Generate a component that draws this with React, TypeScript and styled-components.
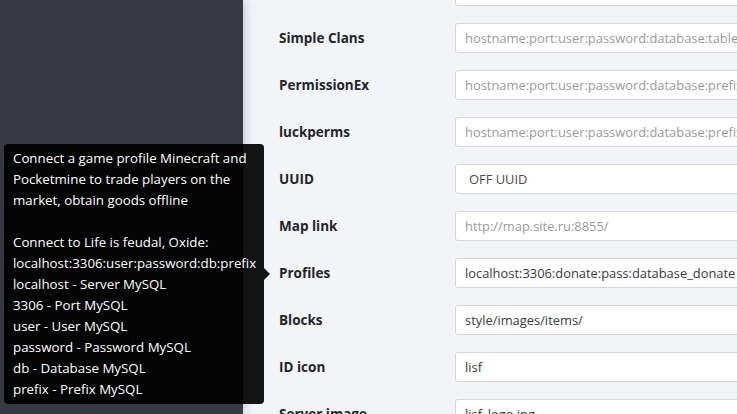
import React from "react";
import styled, { createGlobalStyle } from "styled-components";

const Global = createGlobalStyle`
  html, body { margin: 0; padding: 0; }
  body { font-family: "Open Sans", "Noto Sans", "Liberation Sans", sans-serif; }
  * { box-sizing: border-box; }
`;

const Page = styled.div`
  position: relative;
  display: grid;
  grid-template-columns: 243px 1fr;
  width: 737px;
  height: 414px;
  overflow: hidden;
  background: #f3f4f8;
`;

const Sidebar = styled.aside`
  background: #373a42;
  box-shadow: 2px 0 10px rgba(0, 0, 0, 0.18);
  z-index: 1;
`;

const Main = styled.main`
  padding-left: 36px;
  overflow: hidden;
`;

const Form = styled.div`
  display: flex;
  flex-direction: column;
  gap: 17px;
  margin-top: -24px;
`;

const Row = styled.div`
  display: grid;
  grid-template-columns: 176px 420px;
  align-items: center;
  height: 30px;
`;

const Label = styled.label`
  font-size: 13.5px;
  font-weight: 700;
  color: #23252b;
  white-space: nowrap;
`;

const Field = styled.div<{ $kind?: "placeholder" | "value" | "select" }>`
  height: 30px;
  width: 420px;
  background: #fff;
  border: 1px solid #d5d7db;
  border-radius: 3px;
  display: flex;
  align-items: center;
  padding-left: ${(p) => (p.$kind === "select" ? "13px" : "9px")};
  font-size: 12.9px;
  white-space: nowrap;
  overflow: hidden;
  color: ${(p) =>
    p.$kind === "placeholder" ? "#9a9a9a" : p.$kind === "select" ? "#4a4a4a" : "#3a3a3a"};
`;

const Tooltip = styled.div`
  position: absolute;
  left: 4px;
  top: 144px;
  width: 260px;
  height: 260px;
  background: rgba(0, 0, 0, 0.92);
  border-radius: 4px;
  padding: 4px 9px 0 9px;
  color: #fff;
  font-size: 13.3px;
  line-height: 21px;
  z-index: 5;
  &::after {
    content: "";
    position: absolute;
    right: -6px;
    top: 124px;
    border-style: solid;
    border-width: 6px 0 6px 6px;
    border-color: transparent transparent transparent rgba(0, 0, 0, 0.92);
  }
`;

const Line = styled.div`
  white-space: nowrap;
  min-height: 21px;
`;

const rows: { label: string; text: string; kind: "placeholder" | "value" | "select" }[] = [
  { label: "Server name", text: "", kind: "value" },
  { label: "Simple Clans", text: "hostname:port:user:password:database:table", kind: "placeholder" },
  { label: "PermissionEx", text: "hostname:port:user:password:database:prefix", kind: "placeholder" },
  { label: "luckperms", text: "hostname:port:user:password:database:prefix", kind: "placeholder" },
  { label: "UUID", text: "OFF UUID", kind: "select" },
  { label: "Map link", text: "http://map.site.ru:8855/", kind: "placeholder" },
  { label: "Profiles", text: "localhost:3306:donate:pass:database_donate", kind: "value" },
  { label: "Blocks", text: "style/images/items/", kind: "value" },
  { label: "ID icon", text: "lisf", kind: "value" },
  { label: "Server image", text: "lisf_logo.jpg", kind: "value" },
];

const tipLines = [
  "Connect a game profile Minecraft and",
  "Pocketmine to trade players on the",
  "market, obtain goods offline",
  "",
  "Connect to Life is feudal, Oxide:",
  "localhost:3306:user:password:db:prefix",
  "localhost - Server MySQL",
  "3306 - Port MySQL",
  "user - User MySQL",
  "password - Password MySQL",
  "db - Database MySQL",
  "prefix - Prefix MySQL",
];

export default function App() {
  return (
    <>
      <Global />
      <Page>
        <Sidebar />
        <Main>
          <Form>
            {rows.map((r) => (
              <Row key={r.label}>
                <Label>{r.label}</Label>
                <Field $kind={r.kind}>{r.text}</Field>
              </Row>
            ))}
          </Form>
        </Main>
        <Tooltip>
          {tipLines.map((l, i) => (
            <Line key={i}>{l}</Line>
          ))}
        </Tooltip>
      </Page>
    </>
  );
}
